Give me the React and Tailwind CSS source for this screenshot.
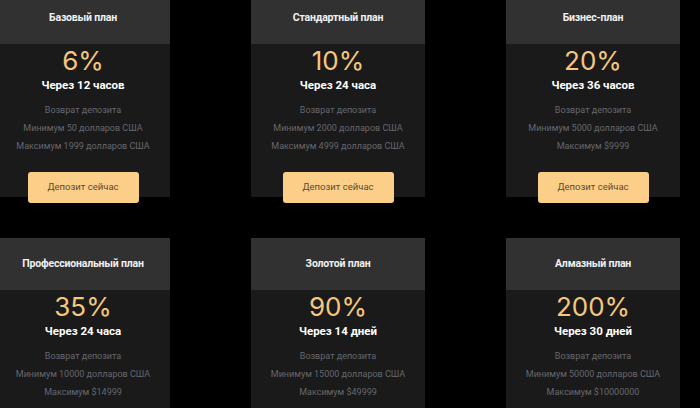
import React from 'react';

const plans = [
    { name: 'Базовый план', rate: '6%', term: 'Через 12 часов', min: 'Минимум 50 долларов США', max: 'Максимум 1999 долларов США' },
    { name: 'Стандартный план', rate: '10%', term: 'Через 24 часа', min: 'Минимум 2000 долларов США', max: 'Максимум 4999 долларов США' },
    { name: 'Бизнес-план', rate: '20%', term: 'Через 36 часов', min: 'Минимум 5000 долларов США', max: 'Максимум $9999' },
    { name: 'Профессиональный план', rate: '35%', term: 'Через 24 часа', min: 'Минимум 10000 долларов США', max: 'Максимум $14999' },
    { name: 'Золотой план', rate: '90%', term: 'Через 14 дней', min: 'Минимум 15000 долларов США', max: 'Максимум $49999' },
    { name: 'Алмазный план', rate: '200%', term: 'Через 30 дней', min: 'Минимум 50000 долларов США', max: 'Максимум $10000000' },
];

const PlanCard = ({ plan }) => (
    <div className="flex flex-col bg-[#1a1a1a] h-[205px]">
        {/* Шапка */}
        <div className="h-[52px] shrink-0 bg-[#313131] flex items-center justify-center">
            <h3 className="text-[10.5px] font-bold tracking-[-0.2px] text-[#f0f0f0] font-['Roboto',sans-serif]">{plan.name}</h3>
        </div>

        <div className="flex flex-col items-center pt-[2px]">
            <div className="text-[26px] leading-[30px] text-[#f5c77e] font-['Inter',sans-serif]">{plan.rate}</div>
            <div className="text-[11.5px] leading-[18px] font-bold text-white font-['Roboto',sans-serif]">{plan.term}</div>

            <ul className="mt-[7px] text-[9px] leading-[18px] text-[#66676d] text-center font-['Roboto',sans-serif]">
                <li>Возврат депозита</li>
                <li>{plan.min}</li>
                <li>{plan.max}</li>
            </ul>

            <button className="mt-[17px] w-[111px] h-[31px] rounded-[3px] bg-[#fbcf88] text-[9.5px] text-[#5b4a33] font-['Roboto',sans-serif]">
                Депозит сейчас
            </button>
        </div>
    </div>
);

const App = () => {
    return (
        <div className="w-[700px] h-[408px] bg-black overflow-hidden">
            <div className="grid grid-cols-[174px_174px_174px] gap-x-[81px] gap-y-[41px] ml-[-4px] mt-[-8px]">
                {plans.map((plan) => (
                    <PlanCard key={plan.name} plan={plan} />
                ))}
            </div>
        </div>
    );
};

export default App;
